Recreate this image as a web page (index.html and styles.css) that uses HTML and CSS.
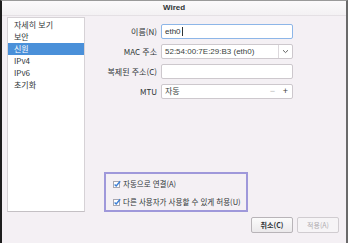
FILE: index.html
```html
<!DOCTYPE html>
<html lang="ko">
<head>
  <meta charset="UTF-8">
  <title>Wired</title>
  <link rel="stylesheet" href="styles.css">
</head>
<body>
  <div class="window">
    <div class="titlebar">Wired</div>

    <div class="content">
      <div class="top">
        <!-- Pages -->
        <ul class="sidebar">
          <li>자세히 보기</li>
          <li>보안</li>
          <li class="active">신원</li>
          <li>IPv4</li>
          <li>IPv6</li>
          <li>초기화</li>
        </ul>

        <div class="main">
          <!-- Identity form -->
          <div class="form">
            <label>이름(N)</label>
            <div class="entry focus">eth0<span class="cursor"></span></div>

            <label>MAC 주소</label>
            <div class="entry combo">
              <span class="value">52:54:00:7E:29:B3 (eth0)</span>
              <span class="arrow">
                <svg width="7" height="5" viewBox="0 0 7 5"><path d="M1 1.2 L3.5 3.6 L6 1.2" fill="none" stroke="#555" stroke-width="0.9"/></svg>
              </span>
            </div>

            <label>복제된 주소(C)</label>
            <div class="entry"></div>

            <label>MTU</label>
            <div class="entry spin">
              <span class="value">자동</span>
              <span class="btn off">−</span>
              <span class="btn">+</span>
            </div>
          </div>

          <div class="checks">
            <div class="check">
              <svg width="8" height="8" viewBox="0 0 8 8"><rect x="0.5" y="1.5" width="6" height="6" fill="#fff" stroke="#a7a7b0"/><path d="M1.6 4.4 L3.2 6 L7.2 1.2" fill="none" stroke="#3d7fd6" stroke-width="1.4"/></svg>
              <span>자동으로 연결(A)</span>
            </div>
            <div class="check">
              <svg width="8" height="8" viewBox="0 0 8 8"><rect x="0.5" y="1.5" width="6" height="6" fill="#fff" stroke="#a7a7b0"/><path d="M1.6 4.4 L3.2 6 L7.2 1.2" fill="none" stroke="#3d7fd6" stroke-width="1.4"/></svg>
              <span>다른 사용자가 사용할 수 있게 허용(U)</span>
            </div>
          </div>
        </div>
      </div>

      <div class="actions">
        <button class="button">취소(C)</button>
        <button class="button disabled">적용(A)</button>
      </div>
    </div>
  </div>
</body>
</html>
```

FILE: styles.css
```css
* { box-sizing: border-box; }

body {
  margin: 0;
  padding: 0;
  background: #f4f0f4;
  font-family: "Noto Sans CJK KR", "Noto Sans", sans-serif;
  font-size: 8px;
  color: #2e3436;
}

.window {
  width: 348px;
  height: 243px;
  background: #f4f0f4;
  border-left: 2px solid #1e1e1e;
  border-right: 2px solid #6a6a6a;
  border-top: 1px solid #9a9a9a;
  display: flex;
  flex-direction: column;
}

.titlebar {
  height: 15px;
  line-height: 14px;
  text-align: center;
  font-family: "Liberation Sans", sans-serif;
  font-weight: bold;
  font-size: 8px;
  color: #2e3436;
  background: linear-gradient(#fbfafb, #f3f1f3);
  border-bottom: 1px solid #e4e0e4;
}

.content {
  padding: 1px 7px 0 5px;
}

.top {
  display: flex;
  height: 195px;
}

.sidebar {
  list-style: none;
  margin: 0;
  padding: 1px 0 0 0;
  width: 78px;
  background: #fff;
  border: 1px solid #d6d2d6;
  border-bottom-color: #c4c0c4;
}

.sidebar li {
  height: 12px;
  line-height: 12px;
  padding-left: 6px;
}

.sidebar li.active {
  background: #4a90d9;
  color: #fff;
}

.main {
  flex: 1;
  display: flex;
  flex-direction: column;
  justify-content: space-between;
}

.form {
  margin: 7px 0 0 15px;
  display: grid;
  grid-template-columns: 57px 132px;
  column-gap: 4px;
  row-gap: 5px;
  align-items: center;
}

.form label {
  text-align: right;
  white-space: nowrap;
}

.entry {
  height: 15px;
  line-height: 13px;
  background: #fff;
  border: 1px solid #cdc8cd;
  border-radius: 2px;
  padding-left: 3px;
  display: flex;
  align-items: center;
  font-family: "Liberation Sans", "Noto Sans CJK KR", sans-serif;
}

.entry.focus {
  border-color: #8db6e8;
}

.cursor {
  width: 1px;
  height: 9px;
  background: #2e3436;
  margin-left: 1px;
}

.value {
  flex: 1;
  color: #3a3f40;
}

.combo .arrow {
  width: 14px;
  height: 13px;
  border-left: 1px solid #dcd8dc;
  display: flex;
  align-items: center;
  justify-content: center;
}

.spin .btn {
  width: 13px;
  text-align: center;
  font-size: 9px;
  color: #444;
}

.spin .btn.off {
  color: #bbb;
}

.checks {
  margin-left: 19px;
  width: 144px;
  height: 40px;
  border: 2px solid #9f98da;
  padding: 4px 0 0 7px;
}

.check {
  display: flex;
  align-items: center;
  gap: 2px;
  height: 11px;
  margin-bottom: 7px;
  white-space: nowrap;
  font-size: 7.5px;
}

.actions {
  display: flex;
  justify-content: flex-end;
  gap: 4px;
  margin-top: 5px;
}

.button {
  width: 42px;
  height: 16px;
  padding: 0;
  font-family: "Noto Sans CJK KR", sans-serif;
  font-size: 7px;
  font-weight: bold;
  color: #2e3436;
  background: linear-gradient(#fbfbfb, #ebe9eb);
  border: 1px solid #b8b4b8;
  border-radius: 2px;
}

.button.disabled {
  font-weight: normal;
  color: #b0acb0;
  background: #f6f4f6;
  border-color: #d0ccd0;
}
```
